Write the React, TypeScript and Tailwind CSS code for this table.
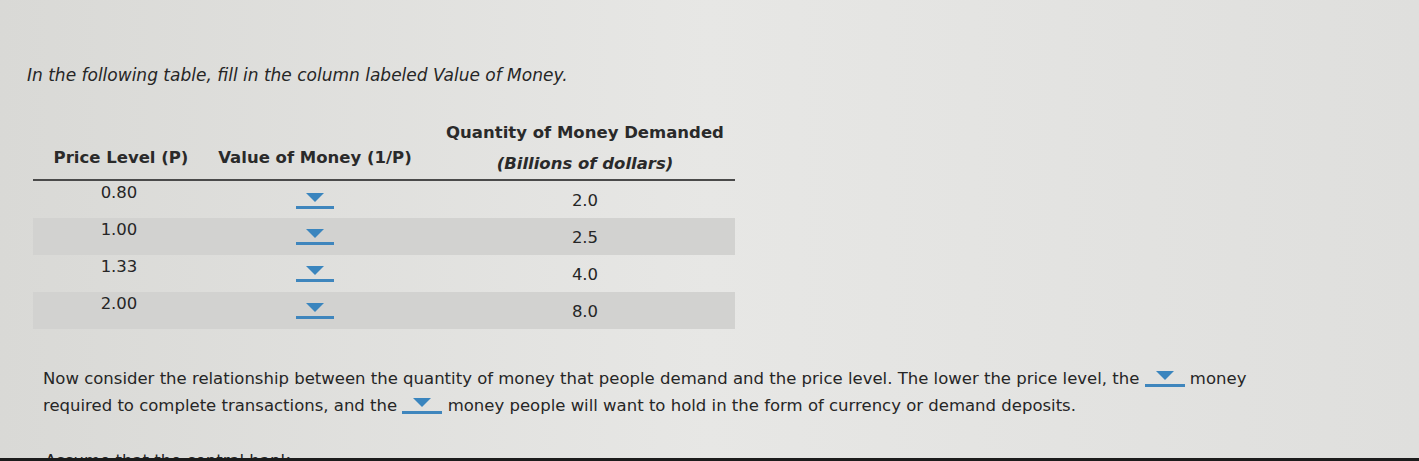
import React from 'react';

const rows = [
  { price: '0.80', qty: '2.0' },
  { price: '1.00', qty: '2.5' },
  { price: '1.33', qty: '4.0' },
  { price: '2.00', qty: '8.0' },
];

const Dropdown: React.FC<{ width?: string }> = ({ width = 'w-[38px]' }) => (
  <span className={`inline-flex ${width} flex-col items-center border-b-[3px] border-[#3f86bd] pb-[4px] align-middle leading-none`}>
    <svg width="18" height="9" viewBox="0 0 18 9" aria-hidden="true">
      <polygon points="0,0 18,0 9,9" fill="#3a85be" />
    </svg>
  </span>
);

export default function App() {
  return (
    <div
      className="relative h-[461px] w-[1419px] overflow-hidden bg-gradient-to-r from-[#d9d9d6] via-[#e7e7e5] to-[#dfdfdd] text-[#262626]"
      style={{ fontFamily: '"DejaVu Sans", Verdana, sans-serif' }}
    >
      <div className="pl-[27px] pt-[63px]">
        <p className="text-[17px] italic">In the following table, fill in the column labeled Value of Money.</p>

        <table className="ml-[6px] mt-[32px] w-[702px] border-collapse text-[16.5px]">
          <thead>
            <tr className="border-b-2 border-[#4a4a4a]">
              <th className="w-[172px] pb-[8px] pl-[4px] align-bottom font-bold text-[#2a2a2a]">Price Level (P)</th>
              <th className="w-[220px] pb-[8px] align-bottom font-bold text-[#2a2a2a]">Value of Money (1/P)</th>
              <th className="pb-[2px] pl-[10px] align-bottom font-bold text-[#2a2a2a]">
                <div>Quantity of Money Demanded</div>
                <div className="mt-[7px] italic">(Billions of dollars)</div>
              </th>
            </tr>
          </thead>
          <tbody>
            {rows.map((r, i) => (
              <tr key={r.price} className={i % 2 === 1 ? 'bg-[#d2d2d0]' : ''}>
                <td className="h-[37px] pb-[12px] text-center">{r.price}</td>
                <td className="h-[37px] pt-[2px] text-center">
                  <Dropdown />
                </td>
                <td className="h-[37px] pt-[4px] pl-[10px] text-center">{r.qty}</td>
              </tr>
            ))}
          </tbody>
        </table>

        <div className="ml-[16px] mt-[36px] w-[1220px] text-[16.5px] leading-[27px]">
          Now consider the relationship between the quantity of money that people demand and the price level. The
          lower the price level, the <Dropdown width="w-[40px]" /> money required to complete transactions, and the{' '}
          <Dropdown width="w-[40px]" /> money people will want to hold in the form of currency or demand deposits.
        </div>

        <p className="ml-[18px] mt-[30px] text-[16.5px]">Assume that the central bank</p>
      </div>
      <div className="absolute inset-x-0 bottom-0 h-[3px] bg-[#1c1c1c]" />
    </div>
  );
}
